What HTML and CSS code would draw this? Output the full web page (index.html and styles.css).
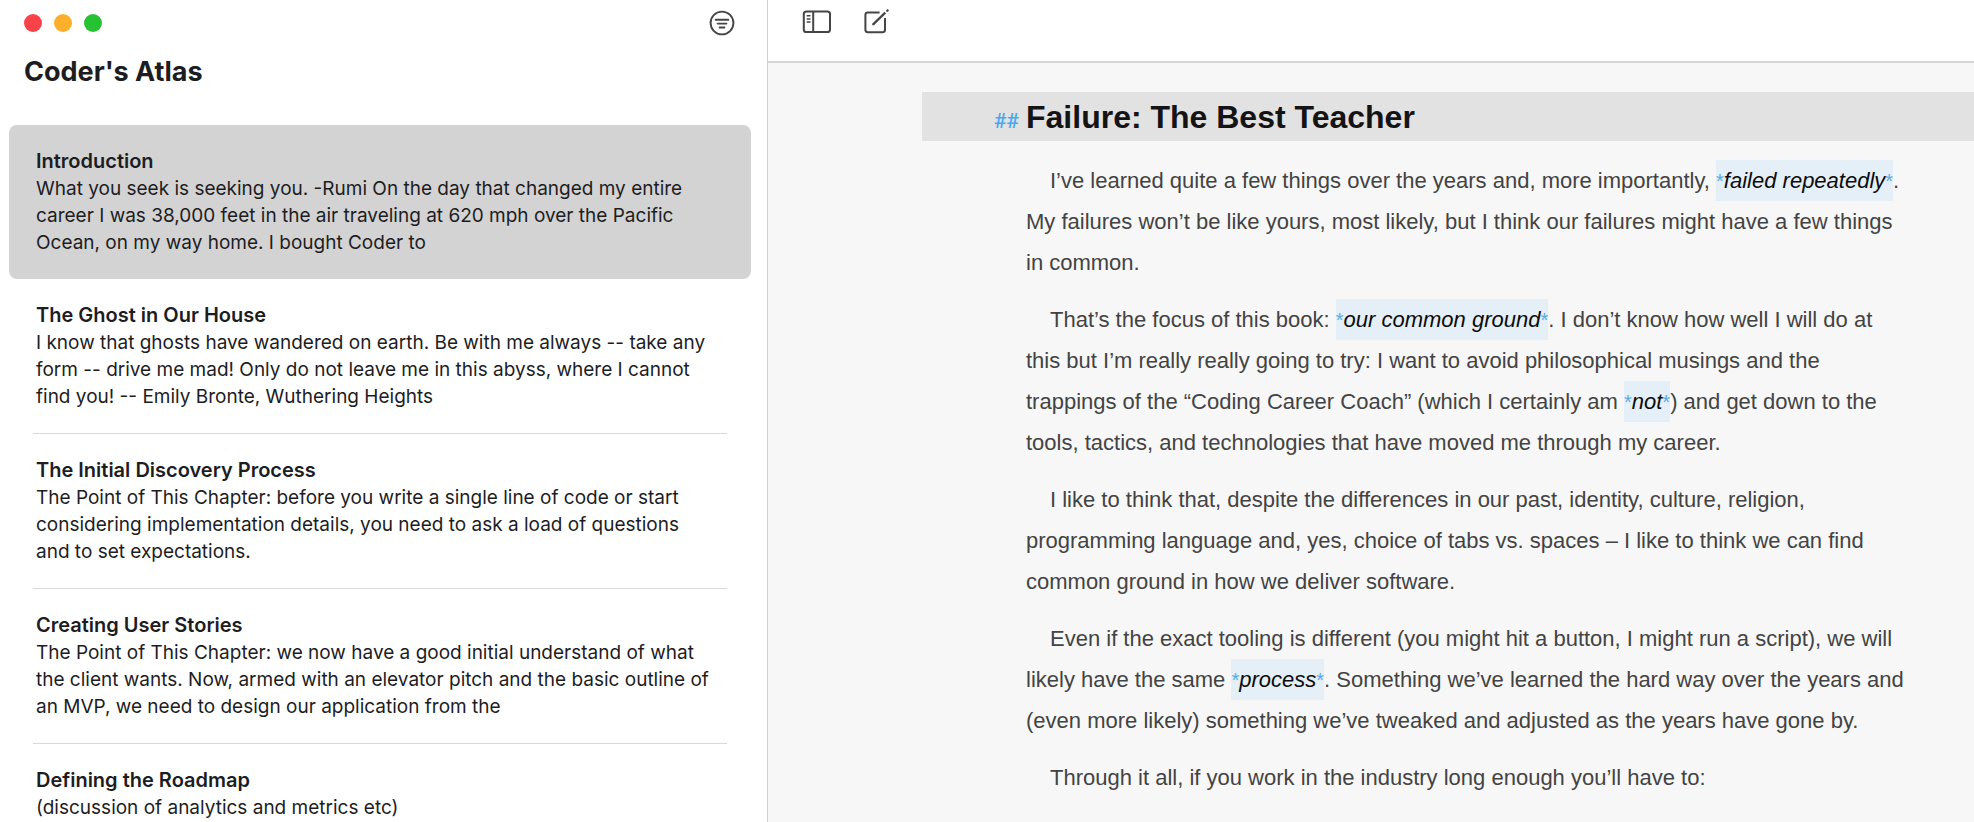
FILE: index.html
```html
<!DOCTYPE html>
<html lang="en">
<head>
<meta charset="utf-8">
<title>Coder's Atlas</title>
<link rel="stylesheet" href="styles.css">
</head>
<body>
<div class="app">
  <aside class="sidebar">
    <div class="titlebar">
      <div class="lights">
        <button class="light light-close" aria-label="Close"></button>
        <button class="light light-minimize" aria-label="Minimize"></button>
        <button class="light light-zoom" aria-label="Zoom"></button>
      </div>
      <button class="icon-button" aria-label="Filter">
        <svg width="26" height="26" viewBox="0 0 26 26" fill="none" stroke="currentColor" stroke-width="1.9" stroke-linecap="round">
          <circle cx="13" cy="13" r="11.4"/>
          <path d="M6.7 9.8h12.6M8.6 13.6h8.8M10.6 17.5h4.8"/>
        </svg>
      </button>
    </div>
    <h2 class="library-title">Coder's Atlas</h2>
    <nav aria-label="Sheets">
      <ul class="sheets">
        <li class="sheet sheet-selected"><a href="#introduction" aria-current="page">
          <strong class="sheet-title">Introduction</strong>
          <span class="sheet-text">What you seek is seeking you. -Rumi On the day that changed my entire career I was 38,000 feet in the air traveling at 620 mph over the Pacific Ocean, on my way home. I bought Coder to</span>
        </a></li>
        <li class="sheet"><a href="#ghost">
          <strong class="sheet-title">The Ghost in Our House</strong>
          <span class="sheet-text">I know that ghosts have wandered on earth. Be with me always -- take any form -- drive me mad! Only do not leave me in this abyss, where I cannot find you! -- Emily Bronte, Wuthering Heights</span>
        </a></li>
        <li class="sheet"><a href="#discovery">
          <strong class="sheet-title">The Initial Discovery Process</strong>
          <span class="sheet-text">The Point of This Chapter: before you write a single line of code or start considering implementation details, you need to ask a load of questions and to set expectations.</span>
        </a></li>
        <li class="sheet"><a href="#stories">
          <strong class="sheet-title">Creating User Stories</strong>
          <span class="sheet-text">The Point of This Chapter: we now have a good initial understand of what the client wants. Now, armed with an elevator pitch and the basic outline of an MVP, we need to design our application from the</span>
        </a></li>
        <li class="sheet"><a href="#roadmap">
          <strong class="sheet-title">Defining the Roadmap</strong>
          <span class="sheet-text">(discussion of analytics and metrics etc)</span>
        </a></li>
      </ul>
    </nav>
  </aside>

  <main class="editor">
    <div class="toolbar">
      <button class="icon-button" aria-label="Toggle sidebar">
        <svg width="30" height="24" viewBox="0 0 30 24" fill="none" stroke="currentColor" stroke-width="2">
          <rect x="1.8" y="1.5" width="26.2" height="20.5" rx="2.6"/>
          <path d="M11.2 1.5v20.5"/>
          <path d="M5.2 5.8h2.8M5.2 8.9h2.8M5.2 12h2.8" stroke-width="1.5" stroke-linecap="round"/>
        </svg>
      </button>
      <button class="icon-button" aria-label="New sheet">
        <svg width="26" height="26" viewBox="0 0 26 26" fill="none" stroke="currentColor" stroke-width="2">
          <path d="M15.6 3.6H3.8a2.4 2.4 0 0 0-2.4 2.4v14.8a2.4 2.4 0 0 0 2.4 2.4h14.8a2.4 2.4 0 0 0 2.4-2.4V9"/>
          <path d="M9.4 15.1 L21.3 3.6" stroke-width="2.2"/>
          <path d="M8.5 16l.5-1.8 1.3 1.3z" fill="currentColor" stroke-width=".8"/>
          <path d="M23.2 1.8 L23.6 1.4" stroke-width="2.2" stroke-linecap="round"/>
        </svg>
      </button>
    </div>
    <article class="document">
      <h1 class="heading"><span class="hashes">##</span>Failure: The Best Teacher</h1>
      <div class="prose">
        <p>I’ve learned quite a few things over the years and, more importantly, <em><span class="mark">*</span>failed repeatedly<span class="mark">*</span></em>. My failures won’t be like yours, most likely, but I think our failures might have a few things in common.</p>
        <p>That’s the focus of this book: <em><span class="mark">*</span>our common ground<span class="mark">*</span></em>. I don’t know how well I will do at this but I’m really really going to try: I want to avoid philosophical musings and the trappings of the “Coding Career Coach” (which I certainly am <em><span class="mark">*</span>not<span class="mark">*</span></em>) and get down to the tools, tactics, and technologies that have moved me through my career.</p>
        <p>I like to think that, despite the differences in our past, identity, culture, religion, programming language and, yes, choice of tabs vs. spaces – I like to think we can find common ground in how we deliver software.</p>
        <p>Even if the exact tooling is different (you might hit a button, I might run a script), we will likely have the same <em><span class="mark">*</span>process<span class="mark">*</span></em>. Something we’ve learned the hard way over the years and (even more likely) something we’ve tweaked and adjusted as the years have gone by.</p>
        <p>Through it all, if you work in the industry long enough you’ll have to:</p>
      </div>
    </article>
  </main>
</div>
</body>
</html>
```
FILE: styles.css
```css
* { box-sizing: border-box; }

body {
  margin: 0;
  background: #fff;
  color: #1d1d1f;
  font-family: "Inter", "Liberation Sans", sans-serif;
}

.app {
  display: flex;
  height: 100vh;
  overflow: hidden;
}

button {
  padding: 0;
  border: 0;
  background: none;
  color: #454545;
}

.icon-button {
  display: flex;
  align-items: center;
  height: 26px;
}

/* Sheet list */
.sidebar {
  flex: 0 1 768px;
  overflow: hidden;
  border-right: 1px solid #d0d0d0;
}

.titlebar {
  display: flex;
  align-items: center;
  justify-content: space-between;
  height: 45px;
  padding: 0 32px 0 24px;
}

.lights { display: flex; gap: 12px; }

.light {
  width: 18px;
  height: 18px;
  border-radius: 50%;
}

.light-close { background: #fc4249; }
.light-minimize { background: #fdae2b; }
.light-zoom { background: #27c232; }

.library-title {
  margin: 7px 24px 33px;
  font-size: 27px;
  font-weight: 700;
  line-height: 40px;
}

.sheets {
  margin: 0;
  padding: 0 16px 0 9px;
  list-style: none;
}

.sheet {
  margin: 0 24px;
  padding: 23px 13px 23px 3px;
  border-bottom: 1px solid #d9d9d9;
  font-size: 19px;
  line-height: 27px;
}

.sheet-selected {
  margin: 0;
  padding: 23px 37px 23px 27px;
  border: 0;
  border-radius: 8px;
  background: #d3d3d3;
}

.sheet a {
  display: block;
  color: inherit;
  text-decoration: none;
}

.sheet-title {
  display: block;
  font-size: 20px;
  font-weight: 600;
}

.sheet-text { display: block; }

/* Editor */
.editor {
  display: flex;
  flex: 1 1 0;
  flex-direction: column;
  min-width: 0;
  background: #f7f7f7;
}

.toolbar {
  display: flex;
  flex: none;
  align-items: flex-start;
  gap: 32px;
  height: 63px;
  padding: 9px 34px;
  border-bottom: 2px solid #d6d6d6;
  background: #fff;
}

.document {
  padding: 29px 0 0 154px;
  font-family: "Liberation Sans", Arial, sans-serif;
}

.heading {
  display: flex;
  align-items: baseline;
  margin: 0;
  padding-top: 2px;
  background: #e2e2e2;
  color: #141414;
  font-size: 32px;
  line-height: 47px;
}

.hashes {
  width: 104px;
  padding-right: 7px;
  color: #4aa8f0;
  font-family: "Roboto", sans-serif;
  font-size: 21px;
  font-weight: 500;
  line-height: 24px;
  text-align: right;
}

.prose {
  max-width: 984px;
  margin-top: 19px;
  padding-left: 104px;
  color: #434343;
  font-size: 22px;
  line-height: 41px;
}

.prose p {
  margin: 0 0 16px;
  text-indent: 24px;
}

.prose em {
  padding: 8px 0;
  background: #e4eff7;
  color: #0c0c0c;
}

.mark {
  color: #58ace6;
  font-size: 20px;
  font-style: normal;
  line-height: 24px;
}
```
